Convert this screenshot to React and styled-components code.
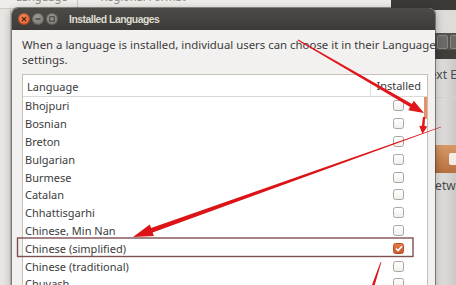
import React from 'react';
import styled, { createGlobalStyle } from 'styled-components';

const Global = createGlobalStyle`
  html, body { margin: 0; padding: 0; background: #e9e7e4; }
  body { font-family: "Noto Sans", "DejaVu Sans", sans-serif; }
`;

const Screen = styled.div`
  position: relative;
  width: 456px;
  height: 285px;
  overflow: hidden;
  background: #e9e7e4;
`;

/* window behind, on the left/top (Language Support) */
const BackWindow = styled.div`
  position: absolute;
  left: -2px;
  top: -14px;
  width: 400px;
  height: 310px;
  background: #efedea;
  border-right: 1px solid #b9b6b1;
  display: flex;
  flex-direction: column;
`;
const BackTabs = styled.div`
  height: 22px;
  display: flex;
  align-items: center;
  padding-left: 18px;
  gap: 22px;
  font-size: 11px;
  color: #8a8782;
  border-bottom: 1px solid #cfccc7;
`;
const BackTab = styled.span`
  padding-right: ${p => (p.$divider ? '10px' : '0')};
  border-right: ${p => (p.$divider ? '1px solid #c9c6c1' : 'none')};
  line-height: 22px;
`;
const BackEdge = styled.div`
  width: 12px;
  flex: 1;
  border-right: 1px solid #c6c3be;
  background: #e8e6e3;
`;

/* window behind, on the right */
const RightWindow = styled.div`
  position: absolute;
  left: 391px;
  top: -12px;
  width: 70px;
  height: 300px;
  display: flex;
  flex-direction: column;
  background: linear-gradient(90deg, #f1f0ef 0%, #f1f0ef 55%, #c3c2c0 100%);
`;
const RightTitle = styled.div`
  height: 22px;
  flex: none;
  background: #3b3a36;
`;
const RightGap = styled.div`
  height: 23px;
  flex: none;
  background: #dedcd8;
`;
const RightToolbar = styled.div`
  height: 17px;
  flex: none;
  background: #55534f;
  display: flex;
  align-items: center;
  gap: 2px;
  padding-left: 46px;
`;
const ToolButton = styled.div`
  width: 14px;
  height: 12px;
  border: 1px solid #8a8782;
  border-radius: 2px;
  background: #6c6a66;
`;
const RightBand = styled.div`
  height: 9px;
  flex: none;
  background: #3f3e3b;
`;
const RightText = styled.div`
  font-size: 12px;
  color: #4a4a4a;
  padding-left: ${p => p.$pl}px;
  margin-top: ${p => p.$mt || 0}px;
  white-space: nowrap;
  line-height: 15px;
`;
const RightLine = styled.div`
  height: 1px;
  margin-top: 15px;
  background: #d6d4d0;
`;
const OrangeBand = styled.div`
  height: 28px;
  margin-top: 47px;
  background: linear-gradient(#d89a66, #b6703e);
  display: flex;
  align-items: center;
  padding-left: 58px;
`;
const HomeIcon = styled.div`
  width: 10px;
  height: 12px;
  background: #f3ece4;
  border-radius: 2px;
`;

/* dialog */
const Dialog = styled.div`
  position: absolute;
  left: 12px;
  top: 8px;
  width: 423px;
  height: 300px;
  background: #f2f1f0;
  border-radius: 6px 6px 0 0;
  box-shadow: 0 0 0 1px rgba(60, 59, 55, 0.55), 0 2px 10px rgba(0, 0, 0, 0.35);
  display: flex;
  flex-direction: column;
`;
const TitleBar = styled.div`
  height: 22px;
  flex: none;
  display: flex;
  align-items: center;
  padding-left: 6px;
  background: linear-gradient(#4c4b47, #3c3b37);
  border-radius: 6px 6px 0 0;
`;
const WinButton = styled.div`
  width: 12px;
  height: 12px;
  border-radius: 50%;
  margin-right: 2px;
  display: flex;
  align-items: center;
  justify-content: center;
  background: ${p => (p.$close ? 'radial-gradient(circle at 45% 35%, #f58a5f, #d9521f)' : 'radial-gradient(circle at 45% 35%, #9b9994, #76746f)')};
  box-shadow: inset 0 0 0 1px rgba(0, 0, 0, 0.25);
`;
const Title = styled.div`
  margin-left: 9px;
  font-family: "Liberation Sans", Arial, sans-serif;
  font-size: 10.4px;
  font-weight: 700;
  letter-spacing: -0.5px;
  color: #dfdbd2;
  white-space: nowrap;
`;
const Body = styled.div`
  flex: 1;
  padding: 7px 7px 0 10px;
  display: flex;
  flex-direction: column;
`;
const Intro = styled.p`
  margin: 0;
  font-size: 11.4px;
  line-height: 15px;
  color: #3c3c3c;
  white-space: nowrap;
`;
const List = styled.div`
  position: relative;
  margin-top: 7px;
  background: #fff;
  border: 1px solid #c3bfb9;
  display: flex;
  flex-direction: column;
`;
const HeaderRow = styled.div`
  height: 21px;
  display: grid;
  grid-template-columns: 1fr 57px;
  border-bottom: 1px solid #dcd9d4;
  font-size: 11px;
  color: #3c3c3c;
`;
const HeaderCell = styled.div`
  display: flex;
  align-items: center;
  padding: 0 ${p => (p.$right ? '6px' : '4px')};
  justify-content: ${p => (p.$right ? 'flex-end' : 'flex-start')};
  border-left: ${p => (p.$right ? '1px solid #e2dfda' : 'none')};
  margin: ${p => (p.$right ? '5px 0 0' : '0')};
  padding-top: ${p => (p.$right ? '0' : '1px')};
  white-space: nowrap;
`;
const HeaderText = styled.span`
  margin-top: ${p => (p.$right ? '-5px' : '0')};
`;
const Row = styled.div`
  height: 17.8px;
  display: grid;
  grid-template-columns: 1fr 57px;
  align-items: center;
  font-size: 11px;
  color: #3c3c3c;
`;
const RowName = styled.div`
  padding-left: 2px;
  white-space: nowrap;
`;
const CheckCell = styled.div`
  display: flex;
  justify-content: center;
`;
const Check = styled.div`
  width: 11px;
  height: 11px;
  box-sizing: border-box;
  border-radius: 2.5px;
  border: 1px solid ${p => (p.$on ? '#b04f26' : '#aaa59e')};
  background: ${p => (p.$on ? 'linear-gradient(#e27a48, #cc5a2b)' : 'linear-gradient(#ffffff, #f1efec)')};
  display: flex;
  align-items: center;
  justify-content: center;
`;
const ScrollThumb = styled.div`
  position: absolute;
  right: 0;
  top: 22px;
  width: 3px;
  height: 22px;
  background: #e6906a;
`;
const Overlay = styled.svg`
  position: absolute;
  left: 0;
  top: 0;
  width: 456px;
  height: 285px;
  pointer-events: none;
`;

const languages = [
  'Bhojpuri',
  'Bosnian',
  'Breton',
  'Bulgarian',
  'Burmese',
  'Catalan',
  'Chhattisgarhi',
  'Chinese, Min Nan',
  'Chinese (simplified)',
  'Chinese (traditional)',
  'Chuvash',
];

function arrowPoints(x1, y1, x2, y2, w1, w2, headLen, headW) {
  const dx = x2 - x1;
  const dy = y2 - y1;
  const len = Math.hypot(dx, dy);
  const ux = dx / len;
  const uy = dy / len;
  const nx = -uy;
  const ny = ux;
  const bx = x2 - ux * headLen;
  const by = y2 - uy * headLen;
  const pts = [
    [x1 + nx * w1 / 2, y1 + ny * w1 / 2],
    [bx + nx * w2 / 2, by + ny * w2 / 2],
  ];
  if (headLen > 0) {
    pts.push([bx + nx * headW / 2, by + ny * headW / 2]);
    pts.push([x2, y2]);
    pts.push([bx - nx * headW / 2, by - ny * headW / 2]);
  }
  pts.push([bx - nx * w2 / 2, by - ny * w2 / 2]);
  pts.push([x1 - nx * w1 / 2, y1 - ny * w1 / 2]);
  return pts.map(p => p.map(v => v.toFixed(1)).join(',')).join(' ');
}

export default function App() {
  return (
    <Screen>
      <Global />
      <BackWindow>
        <BackTabs>
          <BackTab $divider>Language</BackTab>
          <BackTab>Regional Format</BackTab>
        </BackTabs>
        <BackEdge />
      </BackWindow>

      <RightWindow>
        <RightTitle />
        <RightGap />
        <RightToolbar>
          <ToolButton />
          <ToolButton />
        </RightToolbar>
        <RightBand />
        <RightText $mt={8} $pl={33}>Text Editor</RightText>
        <RightLine />
        <OrangeBand>
          <HomeIcon />
        </OrangeBand>
        <RightText $mt={5} $pl={35}>Network</RightText>
      </RightWindow>

      <Dialog>
        <TitleBar>
          <WinButton $close>
            <svg width="6" height="6" viewBox="0 0 6 6">
              <path d="M1 1L5 5M5 1L1 5" stroke="#5a2410" strokeWidth="1.2" />
            </svg>
          </WinButton>
          <WinButton>
            <svg width="6" height="6" viewBox="0 0 6 6">
              <path d="M0.5 3H5.5" stroke="#3c3b37" strokeWidth="1.3" />
            </svg>
          </WinButton>
          <WinButton>
            <svg width="6" height="6" viewBox="0 0 6 6">
              <rect x="0.8" y="0.8" width="4.4" height="4.4" fill="none" stroke="#3c3b37" strokeWidth="1" />
            </svg>
          </WinButton>
          <Title>Installed Languages</Title>
        </TitleBar>
        <Body>
          <Intro>
            When a language is installed, individual users can choose it in their Language
            <br />
            settings.
          </Intro>
          <List>
            <HeaderRow>
              <HeaderCell>
                <HeaderText>Language</HeaderText>
              </HeaderCell>
              <HeaderCell $right>
                <HeaderText $right>Installed</HeaderText>
              </HeaderCell>
            </HeaderRow>
            {languages.map(name => {
              const on = name === 'Chinese (simplified)';
              return (
                <Row key={name}>
                  <RowName>{name}</RowName>
                  <CheckCell>
                    <Check $on={on}>
                      {on && (
                        <svg width="8" height="7" viewBox="0 0 8 7">
                          <path d="M1 3.6L3.1 5.6L7 1.2" fill="none" stroke="#fff" strokeWidth="1.6" />
                        </svg>
                      )}
                    </Check>
                  </CheckCell>
                </Row>
              );
            })}
            <ScrollThumb />
          </List>
        </Body>
      </Dialog>

      <Overlay viewBox="0 0 456 285">
        <rect x="17.5" y="238" width="395.5" height="18.5" fill="none" stroke="#7e5050" strokeWidth="1.4" />
        <polygon points={arrowPoints(298, 40, 424, 113, 1, 3.6, 15, 11)} fill="#e0161a" />
        <polygon points={arrowPoints(424, 117, 422.5, 134, 2.2, 2.6, 8, 8)} fill="#e0161a" />
        <polygon points={arrowPoints(441, 127, 133, 237, 0.6, 4.6, 20, 12)} fill="#dc1418" />
        <polygon points={arrowPoints(381, 262, 371, 292, 0.8, 3.2, 0, 0)} fill="#dc1418" />
      </Overlay>
    </Screen>
  );
}
